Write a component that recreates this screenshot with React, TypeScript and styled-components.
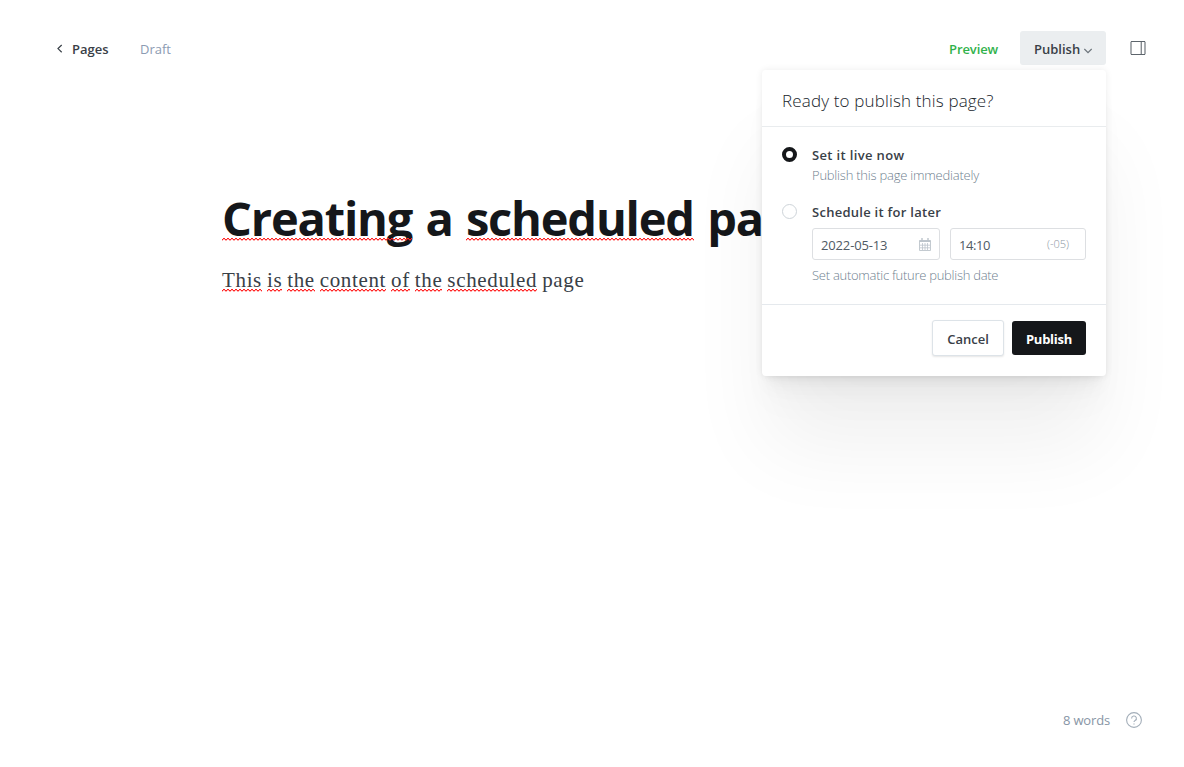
import React from 'react';
import styled, { createGlobalStyle } from 'styled-components';

const GlobalStyle = createGlobalStyle`
  * { box-sizing: border-box; }
  body { margin: 0; background: #fff; color: #394047; font-family: "Open Sans", "Noto Sans", sans-serif; font-size: 13px; }
  button { font-family: inherit; padding: 0; }
  svg { display: block; }
`;

const Screen = styled.div`
  display: flex;
  flex-direction: column;
  height: 767px;
  overflow: hidden;
`;

const Header = styled.header`
  display: flex;
  justify-content: space-between;
  align-items: center;
  height: 96px;
  padding: 0 38px 0 56px;
`;

const HeaderGroup = styled.div`
  display: flex;
  align-items: center;
`;

const Label = styled.span<{ $color?: string; $size?: number; $weight?: number; $spacing?: number; $line?: number }>`
  display: block;
  color: ${p => p.$color ?? '#394047'};
  font-size: ${p => p.$size ?? 13}px;
  font-weight: ${p => p.$weight ?? 400};
  letter-spacing: ${p => p.$spacing ?? 0}px;
  line-height: ${p => p.$line ?? 20}px;
  white-space: nowrap;
`;

const BackLink = styled.a`
  display: flex;
  align-items: center;
  gap: 8px;
  width: 84px;
  padding-top: 2px;
`;

const Status = styled.div`padding-top: 2px;`;

const PreviewLink = styled.a`
  width: 71px;
  padding-top: 2px;
`;

const PublishMenu = styled.div`
  position: relative;
  margin-right: 24px;
`;

const Trigger = styled.button`
  display: flex;
  align-items: center;
  gap: 4px;
  width: 86px;
  height: 34px;
  padding: 2px 0 0 14px;
  border: 0;
  border-radius: 3px;
  background: #ebeef0;

  svg { margin-top: 3px; }
`;

const Dropdown = styled.section`
  position: absolute;
  z-index: 2;
  top: 39px;
  right: 0;
  width: 344px;
  height: 306px;
  border-radius: 4px;
  background: #fff;
  box-shadow:
    0 0 7px rgba(0, 0, 0, 0.08),
    0 2px 2px -5px rgba(0, 0, 0, 0.02),
    0 5px 5px -5px rgba(0, 0, 0, 0.03),
    0 10px 10px -5px rgba(0, 0, 0, 0.03),
    0 17px 18px -5px rgba(0, 0, 0, 0.03),
    0 32px 33px -5px rgba(0, 0, 0, 0.025),
    0 76px 80px -5px rgba(0, 0, 0, 0.06);
`;

const DropdownTitle = styled.header`
  height: 57px;
  padding: 19px 20px 0;
  border-bottom: 1px solid #e9ecee;
`;

const Options = styled.div`
  height: 178px;
  padding: 18px 20px 0;
  border-bottom: 1px solid #e5e9ed;
`;

const Option = styled.div`
  display: flex;
  gap: 15px;
  margin-bottom: 17px;
`;

const Radio = styled.span<{ $on?: boolean }>`
  flex: none;
  width: 15px;
  height: 15px;
  margin-top: 2px;
  border: ${p => (p.$on ? '4px solid #15171a' : '1px solid #ced4d9')};
  border-radius: 50%;
  background: #fff;
`;

const Fields = styled.div`
  display: flex;
  gap: 10px;
  margin: 6px 0 5px;
`;

const Field = styled.div<{ $width: number }>`
  display: flex;
  align-items: center;
  justify-content: space-between;
  width: ${p => p.$width}px;
  height: 32px;
  padding: 1px 8px 0;
  border: 1px solid #dddfe2;
  border-radius: 3px;

  svg { margin-bottom: 1px; }
`;

const Zone = styled.span`
  margin: 0 8px 1px 0;
`;

const Actions = styled.footer`
  display: flex;
  justify-content: flex-end;
  align-items: center;
  gap: 8px;
  height: 66px;
  padding-right: 20px;
`;

const ActionButton = styled.button<{ $primary?: boolean }>`
  display: flex;
  justify-content: center;
  align-items: center;
  width: ${p => (p.$primary ? 74 : 72)}px;
  height: ${p => (p.$primary ? 34 : 36)}px;
  padding-top: 2px;
  border: ${p => (p.$primary ? '0' : '1px solid #dde3e8')};
  border-radius: 3px;
  background: ${p => (p.$primary ? '#15171a' : '#fff')};
  box-shadow: ${p => (p.$primary ? 'none' : '0 1px 2px rgba(0, 0, 0, 0.1)')};
`;

const Editor = styled.main`
  flex: 1;
  padding: 90px 0 0 222px;
`;

const Title = styled.h1`
  margin: 0;
  color: #15171a;
  font-size: 47px;
  font-weight: 700;
  line-height: 64px;
  letter-spacing: -1.18px;
  word-spacing: 2.2px;
  white-space: nowrap;
`;

const Paragraph = styled.p`
  margin: 16px 0 0;
  color: #394047;
  font-family: "Liberation Serif", serif;
  font-size: 21px;
  line-height: 28px;
  letter-spacing: 0.65px;
  word-spacing: -0.95px;
  white-space: nowrap;
`;

const wave = `url("data:image/svg+xml,%3Csvg xmlns='http://www.w3.org/2000/svg' width='4' height='3'%3E%3Cpath d='M1 0h2v1H1zM0 1h1v1H0zM3 1h1v1H3z' fill='%23f22'/%3E%3Cpath d='M0 2h1v1H0zM3 2h1v1H3zM1 1h2v1H1z' fill='%23f22' opacity='.35'/%3E%3C/svg%3E")`;

const Misspelled = styled.span<{ $bottom: number }>`
  position: relative;
  &::after {
    content: "";
    position: absolute;
    left: 0;
    right: 0;
    bottom: ${p => p.$bottom}px;
    height: 3px;
    background: ${wave} 0 0 / 4px 3px repeat-x;
  }
`;

const StatusBar = styled.footer`
  display: flex;
  justify-content: flex-end;
  align-items: center;
  gap: 16px;
  height: 94px;
  padding-right: 42px;
`;

const BackIcon = () => (
  <svg width="8" height="10" viewBox="0 0 8 10" fill="none" stroke="#394047" strokeWidth="1.2">
    <path d="M5.7 1 2 4.6l3.7 3.6" />
  </svg>
);

const DownIcon = () => (
  <svg width="8" height="6" viewBox="0 0 8 6" fill="none" stroke="#6b737a" strokeWidth="1.3">
    <path d="m.3 1 3.7 3.6L7.7 1" />
  </svg>
);

const SidebarIcon = () => (
  <svg width="16" height="14" viewBox="0 0 16 14" fill="none" stroke="#5d656c">
    <path d="M1 .5h14M1 13.5h14" strokeWidth="1.1" />
    <path d="M1 .8v12.4M15 .8v12.4M11.3 1v12" strokeWidth="1.4" opacity=".75" />
  </svg>
);

const CalendarIcon = () => (
  <svg width="12" height="13" viewBox="0 0 12 13" fill="none" stroke="#bcc4cb">
    <path d="M.5 2.5h11v10H.5z" strokeWidth=".9" />
    <path d="M.5 3.2h11" strokeWidth="1.6" />
    <path d="M3 0v3M9 0v3" strokeWidth="1.4" />
    <path d="M3.5 5v7M6 5v7M8.5 5v7M1 7.2h10M1 9.8h10" strokeWidth=".8" />
  </svg>
);

const HelpIcon = () => (
  <svg width="16" height="16" viewBox="0 0 16 16" fill="none" stroke="#a3aeb9" strokeWidth="1.1">
    <circle cx="8" cy="8" r="7.4" />
    <path d="M5.6 6.4a2.4 2.4 0 1 1 3.5 2.1c-.7.4-1.1.7-1.1 1.6" />
    <path d="M7.4 12h1.2" />
  </svg>
);

export default function App() {
  return (
    <Screen>
      <GlobalStyle />
      <Header>
        <HeaderGroup>
          <BackLink>
            <BackIcon />
            <Label $weight={600}>Pages</Label>
          </BackLink>
          <Status><Label $color="#8c9bb2">Draft</Label></Status>
        </HeaderGroup>
        <HeaderGroup>
          <PreviewLink><Label $color="#30b24b" $weight={600} $spacing={-0.1}>Preview</Label></PreviewLink>
          <PublishMenu>
            <Trigger>
              <Label $weight={600}>Publish</Label>
              <DownIcon />
            </Trigger>
            <Dropdown>
              <DropdownTitle>
                <Label $size={17} $weight={300} $line={24} $spacing={0.15} $color="#20262c">Ready to publish this page?</Label>
              </DropdownTitle>
              <Options>
                <Option>
                  <Radio $on />
                  <div>
                    <Label $weight={600} $spacing={0.35}>Set it live now</Label>
                    <Label $weight={300} $color="#6f7f8f" $spacing={-0.22}>Publish this page immediately</Label>
                  </div>
                </Option>
                <Option>
                  <Radio />
                  <div>
                    <Label $weight={600} $spacing={0.27}>Schedule it for later</Label>
                    <Fields>
                      <Field $width={128}>
                        <Label $color="#505a64" $spacing={-0.15}>2022-05-13</Label>
                        <CalendarIcon />
                      </Field>
                      <Field $width={136}>
                        <Label $color="#505a64" $spacing={-0.45}>14:10</Label>
                        <Zone><Label $size={11} $weight={300} $color="#8995a2">(-05)</Label></Zone>
                      </Field>
                    </Fields>
                    <Label $weight={300} $color="#6f7f8f" $spacing={-0.27}>Set automatic future publish date</Label>
                  </div>
                </Option>
              </Options>
              <Actions>
                <ActionButton><Label $weight={600}>Cancel</Label></ActionButton>
                <ActionButton $primary><Label $weight={700} $color="#fff" $spacing={-0.25}>Publish</Label></ActionButton>
              </Actions>
            </Dropdown>
          </PublishMenu>
          <SidebarIcon />
        </HeaderGroup>
      </Header>
      <Editor>
        <Title>
          <Misspelled $bottom={9}>Creating</Misspelled> a <Misspelled $bottom={9}>scheduled</Misspelled> page
        </Title>
        <Paragraph>
          {['This', 'is', 'the', 'content', 'of', 'the', 'scheduled'].map((word, i) => (
            <React.Fragment key={i}><Misspelled $bottom={0}>{word}</Misspelled>{' '}</React.Fragment>
          ))}
          page
        </Paragraph>
      </Editor>
      <StatusBar>
        <Label $color="#8795a5" $spacing={-0.15}>8 words</Label>
        <HelpIcon />
      </StatusBar>
    </Screen>
  );
}
